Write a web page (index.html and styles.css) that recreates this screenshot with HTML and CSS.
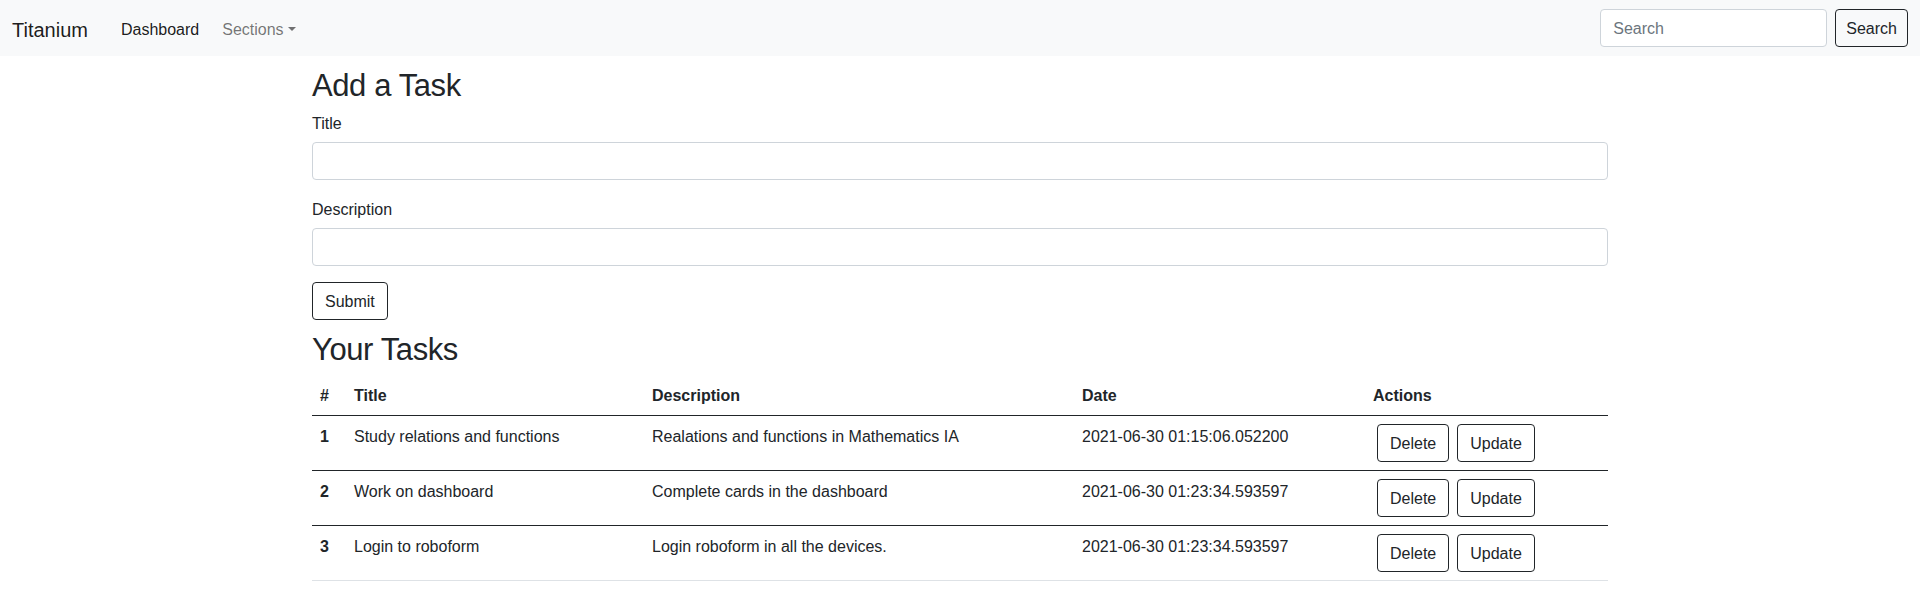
FILE: index.html
```html
<!DOCTYPE html>
<html lang="en">
<head>
<meta charset="utf-8">
<title>Titanium</title>
<link rel="stylesheet" href="styles.css">
</head>
<body>
<nav class="navbar">
  <div class="nav-left">
    <a class="brand" href="#">Titanium</a>
    <a class="nav-link active" href="#">Dashboard</a>
    <a class="nav-link dropdown" href="#">Sections<span class="caret"></span></a>
  </div>
  <form class="search-form">
    <input class="form-control search-input" type="search" placeholder="Search">
    <button class="btn btn-outline" type="button">Search</button>
  </form>
</nav>

<main class="container">
  <h2 class="heading">Add a Task</h2>
  <form class="task-form">
    <div class="field">
      <label class="form-label" for="title">Title</label>
      <input class="form-control" id="title" type="text">
    </div>
    <div class="field">
      <label class="form-label" for="desc">Description</label>
      <input class="form-control" id="desc" type="text">
    </div>
    <button class="btn btn-outline" type="button">Submit</button>
  </form>

  <h2 class="heading heading-tasks">Your Tasks</h2>
  <table class="table">
    <colgroup>
      <col class="c-num"><col class="c-title"><col class="c-desc"><col class="c-date"><col class="c-act">
    </colgroup>
    <thead>
      <tr><th>#</th><th>Title</th><th>Description</th><th>Date</th><th>Actions</th></tr>
    </thead>
    <tbody>
      <tr class="dark">
        <th>1</th><td>Study relations and functions</td><td>Realations and functions in Mathematics IA</td><td>2021-06-30 01:15:06.052200</td>
        <td class="act-cell"><div class="actions"><button class="btn btn-outline btn-act" type="button">Delete</button><button class="btn btn-outline btn-act" type="button">Update</button></div></td>
      </tr>
      <tr class="dark">
        <th>2</th><td>Work on dashboard</td><td>Complete cards in the dashboard</td><td>2021-06-30 01:23:34.593597</td>
        <td class="act-cell"><div class="actions"><button class="btn btn-outline btn-act" type="button">Delete</button><button class="btn btn-outline btn-act" type="button">Update</button></div></td>
      </tr>
      <tr>
        <th>3</th><td>Login to roboform</td><td>Login roboform in all the devices.</td><td>2021-06-30 01:23:34.593597</td>
        <td class="act-cell"><div class="actions"><button class="btn btn-outline btn-act" type="button">Delete</button><button class="btn btn-outline btn-act" type="button">Update</button></div></td>
      </tr>
    </tbody>
  </table>
</main>
</body>
</html>
```

FILE: styles.css
```css
* { box-sizing: border-box; }

body {
  margin: 0;
  font-family: "Liberation Sans", Arial, sans-serif;
  font-size: 16px;
  line-height: 1.5;
  color: #212529;
  background: #fff;
}

a { text-decoration: none; }

.navbar {
  display: flex;
  align-items: center;
  justify-content: space-between;
  height: 56px;
  padding: 0 12px;
  background: #f8f9fa;
}

.nav-left {
  display: flex;
  align-items: center;
}

.brand {
  font-size: 20px;
  line-height: 30px;
  padding: 7px 0 3px;
  margin-right: 21px;
  color: rgba(0, 0, 0, 0.9);
}

.nav-link {
  padding: 10px 11px 6px 12px;
  color: rgba(0, 0, 0, 0.55);
}

.nav-link.active {
  color: rgba(0, 0, 0, 0.9);
}

.caret {
  display: inline-block;
  margin-left: 4px;
  vertical-align: 4px;
  border-top: 4.5px solid rgba(0, 0, 0, 0.55);
  border-left: 4.5px solid transparent;
  border-right: 4.5px solid transparent;
}

.search-form {
  display: flex;
  align-items: center;
}

.form-control {
  display: block;
  width: 100%;
  height: 38px;
  padding: 7px 12px 5px;
  font-family: inherit;
  font-size: 16px;
  line-height: 24px;
  color: #212529;
  background: #fff;
  border: 1px solid #ced4da;
  border-radius: 4px;
}

.form-control::placeholder { color: #6c757d; }

.search-input {
  width: 227px;
  margin-right: 8px;
}

.btn {
  display: inline-block;
  height: 38px;
  padding: 7px 12px 5px;
  font-family: inherit;
  font-size: 16px;
  line-height: 24px;
  border-radius: 4px;
  cursor: pointer;
}

.btn-outline {
  color: #212529;
  background: transparent;
  border: 1px solid #212529;
}

.search-form .btn { padding: 7px 10px 5px; }

.container {
  max-width: 1320px;
  margin: 0 auto;
  padding: 8px 12px 0;
}

.heading {
  margin: 0 0 8px;
  font-size: 31px;
  font-weight: 500;
  letter-spacing: -0.4px;
  line-height: 38.4px;
  padding-top: 3px;
  height: 38.4px;
}

.heading-tasks { margin-top: 8px; }

.field { margin-bottom: 16px; }

.form-label {
  display: block;
  padding-top: 2px;
  margin-bottom: 6px;
}

.table {
  width: 100%;
  table-layout: fixed;
  border-collapse: collapse;
  margin-bottom: 16px;
  vertical-align: top;
}

.c-num { width: 34px; }
.c-title { width: 298px; }
.c-desc { width: 430px; }
.c-date { width: 291px; }
.c-act { width: 243px; }

.table th,
.table td {
  padding: 9px 8px 7px;
  text-align: left;
  border-bottom: 1px solid #dee2e6;
  vertical-align: top;
}

.table td.act-cell {
  padding: 8px;
}

.table thead th {
  vertical-align: bottom;
  border-bottom-color: #212529;
}

.table tr.dark th,
.table tr.dark td {
  border-bottom-color: #212529;
}

.actions { display: flex; }

.btn-act { margin: 0 4px; }
```
